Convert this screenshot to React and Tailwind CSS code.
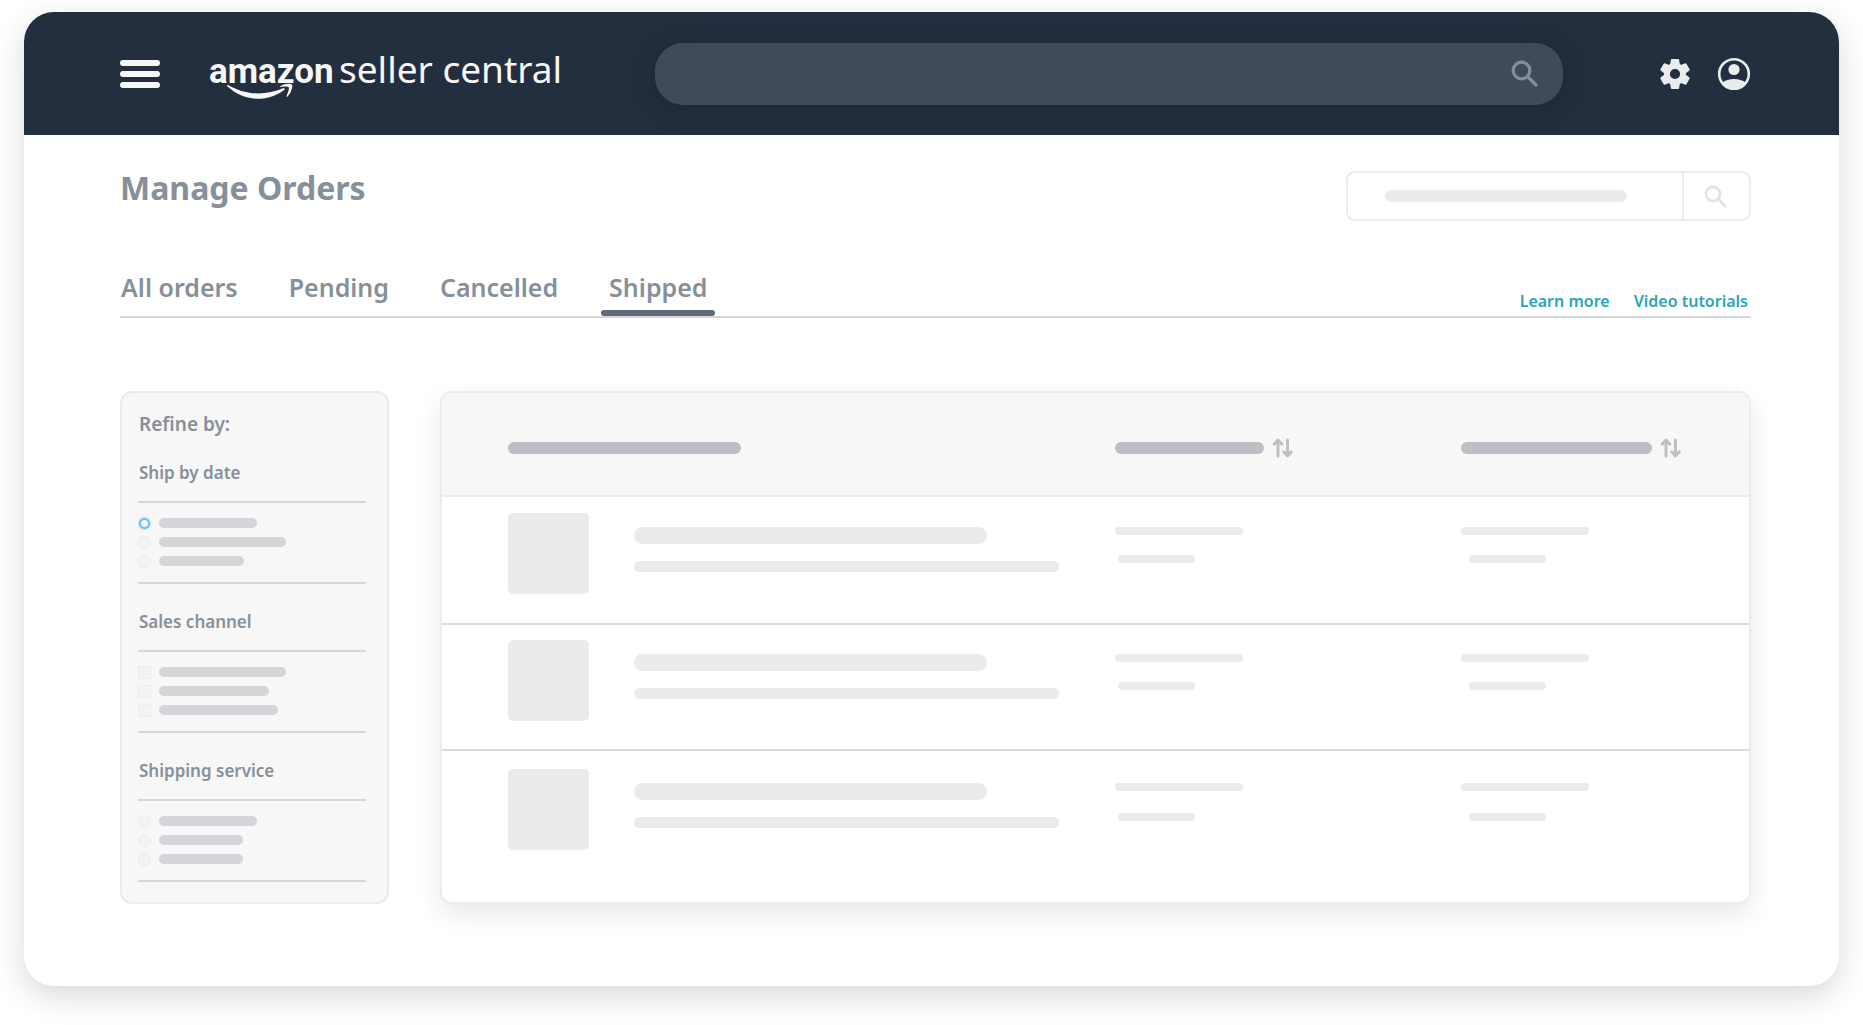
import { useState } from 'react';
import clsx from 'clsx';

const TABS = ['All orders', 'Pending', 'Cancelled', 'Shipped'];

const FILTERS = [
  { title: 'Ship by date', type: 'radio', bars: ['w-[98px]', 'w-[127px]', 'w-[85px]'], checked: 0 },
  { title: 'Sales channel', type: 'checkbox', bars: ['w-[127px]', 'w-[110px]', 'w-[119px]'] },
  { title: 'Shipping service', type: 'radio', bars: ['w-[98px]', 'w-[84px]', 'w-[84px]'] },
];

const ROWS = [
  { id: 1, cell: 'h-[128px] pt-4 border-b-2', side: 'pt-[30px] border-b-2', gap: 'gap-5' },
  { id: 2, cell: 'h-[126px] pt-[15px] border-b-2', side: 'pt-[29px] border-b-2', gap: 'gap-5' },
  { id: 3, cell: 'h-[151px] pt-[18px]', side: 'pt-8', gap: 'gap-[22px]' },
];

export default function App() {
  const [tab, setTab] = useState('Shipped');

  return (
    <div className="min-h-screen bg-white px-6 pt-3 pb-10 font-['Noto_Sans','Open_Sans',sans-serif] text-[#879099]">
      <div className="rounded-[30px] bg-white pb-[82px] shadow-[0_10px_30px_rgba(35,47,62,0.18)]">
        <TopBar />

        <main className="pt-9 pr-[88px] pl-24">
          <div className="flex items-start justify-between">
            <h1 className="text-[32px] leading-[34px] font-bold">Manage Orders</h1>
            <OrderSearch />
          </div>

          <div className="mt-[50px] flex items-end justify-between border-b-2 border-[#d5d7da]">
            <nav className="flex gap-9">
              {TABS.map(name => (
                <button
                  key={name}
                  type="button"
                  onClick={() => setTab(name)}
                  className="-ml-px flex flex-col gap-[7px] text-[25px] leading-8 font-semibold first:-ml-[7px]"
                >
                  <span className="px-2">{name}</span>
                  <span className={clsx('h-1.5 w-full rounded-full', tab === name && 'bg-[#5f6b7a]')} />
                </button>
              ))}
            </nav>
            <div className="flex gap-6 pr-[3px] pb-[3px] text-base leading-6 font-semibold text-[#2aa5b8]">
              <a href="#learn">Learn more</a>
              <a href="#videos">Video tutorials</a>
            </div>
          </div>

          <div className="mt-[73px] flex items-stretch gap-[51px]">
            <Filters />
            <OrdersTable />
          </div>
        </main>
      </div>
    </div>
  );
}

function TopBar() {
  return (
    <header className="flex h-[123px] items-center rounded-t-[30px] bg-[#232f3f] pr-[88px] pl-24">
      <button type="button" aria-label="Menu" className="flex w-10 shrink-0 flex-col gap-[5px]">
        <span className="h-1.5 rounded-full bg-[#f7f7f7]" />
        <span className="h-1.5 rounded-full bg-[#f7f7f7]" />
        <span className="h-1.5 rounded-full bg-[#f7f7f7]" />
      </button>
      <Logo />
      <div className="ml-[87px] flex h-[62px] min-w-0 flex-1 items-center rounded-[28px] bg-[#404b59] pr-[25px] shadow-[0_3px_24px_rgba(15,28,36,0.45)]">
        <input type="text" aria-label="Search" className="h-full min-w-0 flex-1 bg-transparent px-8 text-xl text-white outline-none" />
        <button type="button" aria-label="Run search">
          <SearchIcon className="size-[27px] text-[#868d96]" />
        </button>
      </div>
      <button type="button" aria-label="Settings" className="ml-[97px]">
        <GearIcon />
      </button>
      <button type="button" aria-label="Account" className="ml-[27px]">
        <AccountIcon />
      </button>
    </header>
  );
}

function Logo() {
  return (
    <svg viewBox="0 0 360 64" className="ml-12 h-16 w-[360px] shrink-0 text-[#f7f7f7]" fill="currentColor" role="img" aria-label="amazon seller central">
      <text x="1" y="41" fontFamily="Roboto, sans-serif" fontWeight="700" fontSize="35">amazon</text>
      <text x="131" y="41" fontFamily="'Noto Sans', sans-serif" fontWeight="400" fontSize="37">seller central</text>
      {/* smile */}
      <path d="M19.300 44.200c-.8-.8.100-1.700 1.200-1C29 48 39 51.400 50 51.400c8.500 0 17.500-1.900 25-5.100 1.400-.6 2.300.8 1.200 1.700C69 53.500 59 56.800 50.500 56.800c-12 0-22.800-4.900-31.200-12.600z" />
      <path d="M72 44.400c4.200-3 10.900-3.200 12-1.800.9 1.300-.4 8.300-4.400 11.800-.7.500-1.300.2-1-.5.9-2.400 3-7.500 2.100-8.700-.9-1.200-5.800-.6-8.200-.3-.8.100-.9-.2-.5-.5z" />
    </svg>
  );
}

function OrderSearch() {
  return (
    <div className="flex h-[50px] w-[405px] rounded-[9px] border-2 border-[#ebecee]">
      <div className="flex flex-1 items-center pl-[37px]">
        <Bar className="h-3 w-[242px] bg-[#e9ebed]" />
      </div>
      <button type="button" aria-label="Search orders" className="flex w-[67px] items-center border-l-2 border-[#ebecee] pl-5">
        <SearchIcon className="size-[23px] text-[#e1e3e5]" />
      </button>
    </div>
  );
}

function Filters() {
  return (
    <aside className="w-[269px] shrink-0 rounded-xl border-2 border-[#ebebec] bg-[#f7f7f7] pt-[19px] pr-[21px] pb-[17px] pl-4">
      <h2 className="pl-px text-[19px] leading-6 font-semibold">Refine by:</h2>
      <div className="mt-[25px] flex flex-col gap-[26px]">
        {FILTERS.map(f => (
          <fieldset key={f.title}>
            <legend className="pl-px text-[17px] leading-6 font-semibold">{f.title}</legend>
            <div className="mt-4 flex flex-col gap-[7px] border-y-2 border-[#d5d7da] pt-[14px] pb-[15px]">
              {f.bars.map((w, i) => (
                <label key={i} className="flex h-3 items-center gap-2">
                  <input
                    type={f.type}
                    name={f.title}
                    aria-label={`${f.title} ${i + 1}`}
                    defaultChecked={f.checked === i}
                    className={clsx(
                      'size-[13px] appearance-none border border-[#eaebed] bg-[#f2f3f5]',
                      f.type === 'radio'
                        ? 'rounded-full checked:border-[#a9dafc] checked:inset-ring-2 checked:inset-ring-[#6cbdf8]'
                        : 'rounded-[2px] checked:bg-[#6cbdf8]'
                    )}
                  />
                  <Bar className={clsx('h-2.5 bg-[#d3d5d9]', w)} />
                </label>
              ))}
            </div>
          </fieldset>
        ))}
      </div>
    </aside>
  );
}

function OrdersTable() {
  return (
    <div className="min-w-0 flex-1 overflow-hidden rounded-xl border-2 border-[#ebecee] bg-white shadow-[0_10px_26px_-2px_rgba(35,47,62,0.13)]">
      <table className="w-full table-fixed border-separate border-spacing-0">
        <colgroup>
          <col className="w-[51.5%]" />
          <col className="w-[26.5%]" />
          <col className="w-[22%]" />
        </colgroup>
        <thead className="bg-[#f7f7f7]">
          <tr>
            <th className="h-[104px] border-b-2 border-[#ebecee] pt-2 pl-[66px]">
              <Bar className="h-3 w-[233px] bg-[#bcc0c5]" />
            </th>
            <th className="border-b-2 border-[#ebecee] pt-2">
              <SortHeader width="w-[149px]" label="Sort by first column" />
            </th>
            <th className="border-b-2 border-[#ebecee] pt-2">
              <SortHeader width="w-[191px]" label="Sort by second column" />
            </th>
          </tr>
        </thead>
        <tbody>
          {ROWS.map(row => (
            <tr key={row.id} className="align-top">
              <td className={clsx('border-[#d8dadd] pl-[66px]', row.cell)}>
                <div className="flex gap-[45px]">
                  <div className="size-[81px] shrink-0 rounded-[5px] bg-[#e9ebed]" />
                  <div className="flex min-w-0 flex-col gap-[17px] pt-[14px]">
                    <Bar className="h-[17px] w-[353px] bg-[#e9ebed]" />
                    <Bar className="h-[11px] w-[425px] bg-[#e9ebed]" />
                  </div>
                </div>
              </td>
              <td className={clsx('border-[#d8dadd]', row.side)}>
                <div className={clsx('flex flex-col', row.gap)}>
                  <Bar className="h-2 w-32 bg-[#e9ebed]" />
                  <Bar className="ml-[3px] h-2 w-[77px] bg-[#e9ebed]" />
                </div>
              </td>
              <td className={clsx('border-[#d8dadd]', row.side)}>
                <div className={clsx('flex flex-col', row.gap)}>
                  <Bar className="h-2 w-32 bg-[#e9ebed]" />
                  <Bar className="ml-2 h-2 w-[77px] bg-[#e9ebed]" />
                </div>
              </td>
            </tr>
          ))}
        </tbody>
      </table>
    </div>
  );
}

function SortHeader({ width, label }) {
  return (
    <button type="button" aria-label={label} className="flex items-center gap-2">
      <Bar className={clsx('h-3 bg-[#bcc0c5]', width)} />
      <svg viewBox="0 0 22 20" className="h-5 w-[22px] text-[#bcc0c5]" fill="none" stroke="currentColor" strokeWidth="3" strokeLinecap="round" strokeLinejoin="round">
        <path d="M6 18V3M2.200 6.200L6 2l3.800 4.200" />
        <path d="M15.500 2v15M11.700 13.800l3.800 4.200 3.800-4.200" />
      </svg>
    </button>
  );
}

function Bar({ className }) {
  return <div className={clsx('rounded-full', className)} />;
}

function SearchIcon({ className }) {
  return (
    <svg viewBox="0 0 27 27" className={className} fill="none" stroke="currentColor" strokeWidth="3.200" strokeLinecap="round">
      <circle cx="10.500" cy="10.500" r="8.300" />
      <path d="M16.500 16.500l8.500 8.500" />
    </svg>
  );
}

function GearIcon() {
  return (
    <svg viewBox="0 0 30 30" className="size-[30px] text-[#e9ebed]" fill="currentColor">
      {[0, 60, 120].map(a => (
        <path key={a} d="M11.800 0h6.400q.8 0 .9.800L20.300 8v14l-1.200 7.200q-.1.800-.9.800h-6.400q-.8 0-.9-.8L9.700 22V8l1.200-7.200q.1-.8.9-.8z" transform={`rotate(${a} 15 15)`} />
      ))}
      <circle cx="15" cy="15" r="11" />
      <circle cx="15" cy="15" r="5.100" fill="#232f3f" />
    </svg>
  );
}

function AccountIcon() {
  return (
    <svg viewBox="0 0 34 34" className="size-[34px] text-[#e9ebed]" fill="currentColor">
      <circle cx="17" cy="17" r="14.800" fill="none" stroke="currentColor" strokeWidth="2.600" />
      <circle cx="17" cy="12.500" r="5.600" />
      <path d="M5.500 25.500C8 23.500 12.500 22 17 22s9 1.500 11.500 3.500C26 29.500 22 32 17 32S8 29.500 5.500 25.500z" />
    </svg>
  );
}
